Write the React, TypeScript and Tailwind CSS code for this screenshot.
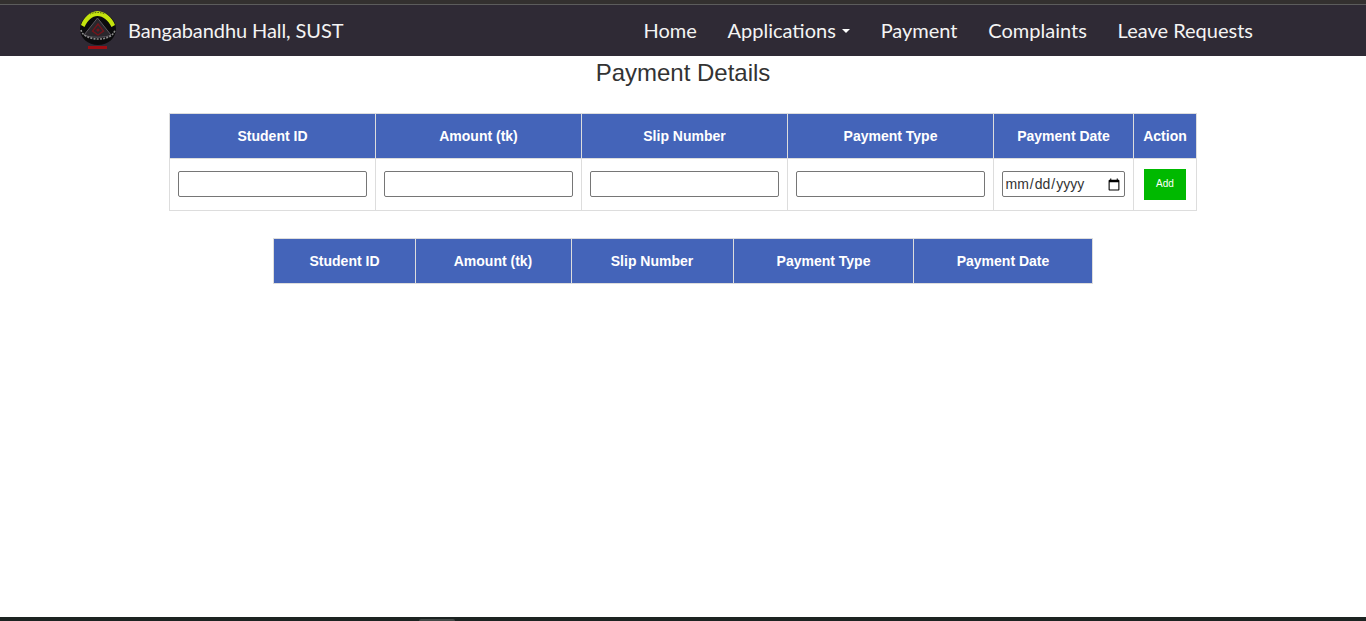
import React from 'react';

const Logo = () => (
  <svg width="40" height="40" viewBox="0 0 40 40" className="shrink-0">
    <path d="M2 19 C2 10 10 2 20 2 C30 2 38 10 38 19 C38 28 30 35 20 35 C10 35 2 28 2 19 Z" fill="#0b0b0d" />
    <path d="M3 15 C6 7 12 1.5 19.5 1 C27 1.5 34 7 37 15 L33.5 17 C30 10 25 6 19.5 6 C14 6 10 10 6.5 17 Z" fill="#c4e30e" />
    <path d="M12 4 C16 2 23 2 27 4" fill="none" stroke="#5a6a10" strokeWidth="1" strokeDasharray="1.5 1" />
    <path d="M19.5 8 L33 25 C28 28 12 28 6 25 Z" fill="#2a272c" stroke="#5c5860" strokeWidth="1" />
    <path d="M20 14 L25.5 21 L20 25 L14.5 21 Z" fill="none" stroke="#74141a" strokeWidth="1.4" />
    <circle cx="20" cy="20" r="1.6" fill="#74141a" />
    <path d="M3 20 C5 31 34 33 37 20" fill="none" stroke="#8a8a8a" strokeWidth="1.6" strokeDasharray="2 1.2" />
    <rect x="10" y="36" width="19" height="3" fill="#9e0d12" />
  </svg>
);

const navItems = ['Home', 'Applications', 'Payment', 'Complaints', 'Leave Requests'];

const Navbar = () => (
  <header className="bg-[#2f2a35] h-[56px] border-t-[4px] border-[#33302f] shadow-[inset_0_1px_0_#5c5c5c] font-['Lato','Noto_Sans',sans-serif] text-white">
    <div className="flex items-center justify-between h-full pl-[78px] pr-[113px]">
      <div className="flex items-center gap-[10px]">
        <Logo />
        <span className="text-[20px] tracking-[-0.09px] text-[#f4f4f4]">Bangabandhu Hall, SUST</span>
      </div>
      <nav className="flex items-center gap-[30.8px] text-[20px] text-[#f4f4f4]">
        {navItems.map((item) => (
          <a key={item} href="#" className="flex items-center">
            {item}
            {item === 'Applications' && (
              <span className="ml-[6px] mt-[2px] border-x-[4px] border-t-[4px] border-x-transparent border-t-white" />
            )}
          </a>
        ))}
      </nav>
    </div>
  </header>
);

const thClass = 'bg-[#4464b9] border border-[#dddddd] text-white text-[14px] font-bold text-center p-0';
const tdClass = 'border border-[#dddddd] text-center p-0';
const inputCell = 'border border-[#dddddd] text-center p-0 pb-[2px]';
const inputClass =
  'block mx-auto w-[189px] h-[26px] bg-white border border-[#767676] rounded-[2px] text-[14px] text-[#333333]';

const App = () => {
  return (
    <div className="h-[621px] overflow-hidden flex flex-col bg-white font-['Liberation_Sans',Arial,sans-serif]">
      <Navbar />

      {/* Content */}
      <main className="flex-1 flex flex-col items-center">
        <h2 className="text-[24px] leading-[34px] text-[#333333] mb-[23px] mt-0">Payment Details</h2>

        <table className="border-collapse table-fixed w-[1028px]">
          <thead>
            <tr className="h-[45px]">
              <th className={`${thClass} w-[206px]`}>Student ID</th>
              <th className={`${thClass} w-[206px]`}>Amount (tk)</th>
              <th className={`${thClass} w-[206px]`}>Slip Number</th>
              <th className={`${thClass} w-[206px]`}>Payment Type</th>
              <th className={`${thClass} w-[140px]`}>Payment Date</th>
              <th className={`${thClass} w-[63px]`}>Action</th>
            </tr>
          </thead>
          <tbody>
            <tr className="h-[52px]">
              <td className={inputCell}><input type="text" className={inputClass} /></td>
              <td className={inputCell}><input type="text" className={inputClass} /></td>
              <td className={inputCell}><input type="text" className={inputClass} /></td>
              <td className={inputCell}><input type="text" className={inputClass} /></td>
              <td className={inputCell}>
                <input
                  type="date"
                  className="block mx-auto w-[123px] h-[26px] bg-white border border-[#767676] rounded-[2px] text-[14px] text-[#333333] pl-[1.5px] pr-[1px] pt-[2px]"
                />
              </td>
              <td className={tdClass}>
                <button className="block mx-auto w-[42px] h-[31px] pb-[2px] bg-[#00b900] text-white text-[10px]">Add</button>
              </td>
            </tr>
          </tbody>
        </table>

        <table className="border-collapse table-fixed w-[820px] mt-[27px]">
          <thead>
            <tr className="h-[45px]">
              <th className={`${thClass} w-[142px]`}>Student ID</th>
              <th className={`${thClass} w-[156px] pr-px`}>Amount (tk)</th>
              <th className={`${thClass} w-[162px] pr-px`}>Slip Number</th>
              <th className={`${thClass} w-[180px]`}>Payment Type</th>
              <th className={`${thClass} w-[179px]`}>Payment Date</th>
            </tr>
          </thead>
        </table>
      </main>

      {/* Bottom strip */}
      <div className="h-[4px] bg-[#1c2321] flex pl-[419px]">
        <div className="w-[36px] h-[2px] mt-[2px] rounded-t-[2px] bg-[#444a48]" />
      </div>
    </div>
  );
};

export default App;
